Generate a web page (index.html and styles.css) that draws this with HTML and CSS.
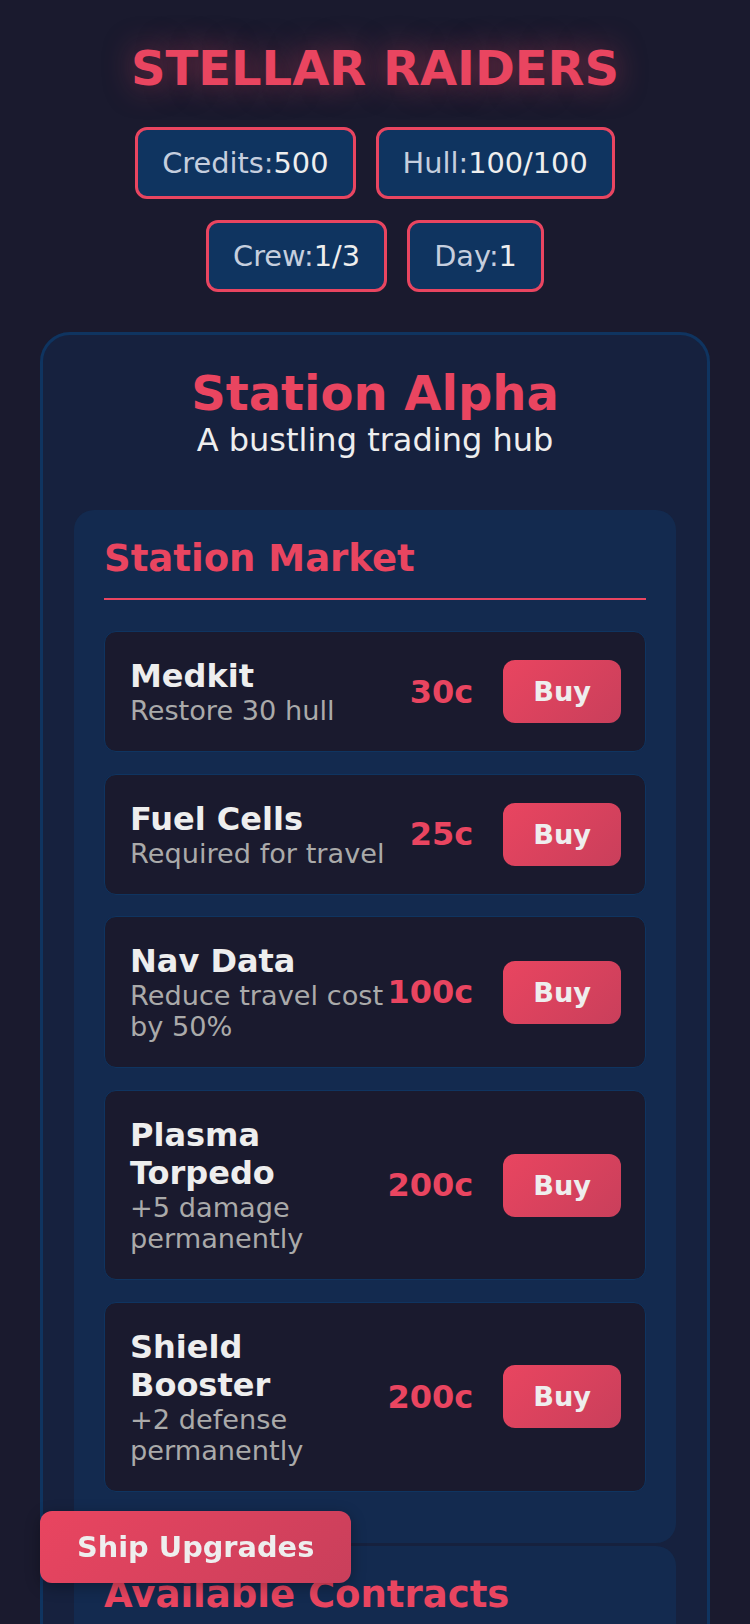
FILE: index.html
```html
<!DOCTYPE html>
<html lang="en">
<head>
<meta charset="utf-8">
<title>Stellar Raiders</title>
<link rel="stylesheet" href="styles.css">
</head>
<body>
<div class="app">
  <h1 class="title">STELLAR RAIDERS</h1>
  <div class="stats">
    <div class="stat"><span class="stat-label">Credits:</span><span class="stat-value">500</span></div>
    <div class="stat"><span class="stat-label">Hull:</span><span class="stat-value">100/100</span></div>
    <div class="stat"><span class="stat-label">Crew:</span><span class="stat-value">1/3</span></div>
    <div class="stat"><span class="stat-label">Day:</span><span class="stat-value">1</span></div>
  </div>

  <div class="panel">
    <div class="location">
      <h2 class="location-name">Station Alpha</h2>
      <p class="location-desc">A bustling trading hub</p>
    </div>

    <section class="section">
      <h3 class="section-title">Station Market</h3>
      <div class="item">
        <div class="item-info">
          <div class="item-name">Medkit</div>
          <div class="item-desc">Restore 30 hull</div>
        </div>
        <div class="item-price">30c</div>
        <button class="btn buy">Buy</button>
      </div>
      <div class="item">
        <div class="item-info">
          <div class="item-name">Fuel Cells</div>
          <div class="item-desc">Required for travel</div>
        </div>
        <div class="item-price">25c</div>
        <button class="btn buy">Buy</button>
      </div>
      <div class="item">
        <div class="item-info">
          <div class="item-name">Nav Data</div>
          <div class="item-desc">Reduce travel cost by 50%</div>
        </div>
        <div class="item-price">100c</div>
        <button class="btn buy">Buy</button>
      </div>
      <div class="item">
        <div class="item-info">
          <div class="item-name">Plasma Torpedo</div>
          <div class="item-desc">+5 damage permanently</div>
        </div>
        <div class="item-price">200c</div>
        <button class="btn buy">Buy</button>
      </div>
      <div class="item">
        <div class="item-info">
          <div class="item-name">Shield Booster</div>
          <div class="item-desc">+2 defense permanently</div>
        </div>
        <div class="item-price">200c</div>
        <button class="btn buy">Buy</button>
      </div>
    </section>

    <section class="section">
      <h3 class="section-title">Available Contracts</h3>
      <div class="item">
        <div class="item-info">
          <div class="item-name">Cargo Run</div>
          <div class="item-desc">Deliver supplies to Outpost Beta</div>
        </div>
        <div class="item-price">150c</div>
        <button class="btn buy">Accept</button>
      </div>
    </section>
  </div>
</div>
<button class="btn floating">Ship Upgrades</button>
</body>
</html>
```
FILE: styles.css
```css
* {
  box-sizing: border-box;
}

html, body {
  margin: 0;
  padding: 0;
}

body {
  background: #1a1a2e;
  color: #eeeeee;
  font-family: "DejaVu Sans", "Noto Sans", sans-serif;
}

.app {
  padding: 40px;
}

.title {
  margin: 0 0 31px;
  text-align: center;
  font-size: 48px;
  font-weight: bold;
  line-height: normal;
  color: #e94560;
  text-shadow: 0 0 30px rgba(233, 69, 96, 0.5);
}

.stats {
  display: flex;
  flex-wrap: wrap;
  justify-content: center;
  gap: 21px 20px;
  margin-bottom: 39.5px;
}

.stat {
  background: #0f3460;
  border: 3px solid #e94560;
  border-radius: 12px;
  padding: 16px 24px;
  font-size: 28.8px;
  line-height: normal;
}

.stat-label {
  color: #c5cede;
}

.stat-value {
  color: #eeeeee;
}

.panel {
  background: #16213e;
  border: 3px solid #0f3460;
  border-radius: 30px;
  padding: 30px 31px;
}

.location {
  text-align: center;
  margin-bottom: 51.5px;
}

.location-name {
  margin: 0;
  font-size: 48px;
  line-height: normal;
  color: #e94560;
}

.location-desc {
  margin: 0;
  font-size: 32px;
  line-height: normal;
  color: #eeeeee;
}

.section {
  background: rgba(15, 52, 96, 0.5);
  border-radius: 20px;
  padding: 27px 30px 30px;
  margin-bottom: 3px;
}

.section-title {
  margin: 0 0 31px;
  padding-bottom: 18px;
  border-bottom: 2px solid #e94560;
  font-size: 37px;
  line-height: normal;
  color: #e94560;
}

.item {
  display: flex;
  align-items: center;
  background: #1a1a2e;
  border: 1px solid #0f3460;
  border-radius: 12px;
  padding: 25px 24px 25px 25px;
  margin-bottom: 21.7px;
}

.item-info {
  flex: 1;
  min-width: 0;
}

.item-name {
  font-size: 32px;
  font-weight: bold;
  line-height: normal;
  color: #eeeeee;
}

.item-desc {
  font-size: 27.2px;
  line-height: normal;
  color: #aaaaaa;
}

.item-price {
  font-size: 32px;
  font-weight: bold;
  color: #e94560;
  margin-right: 30px;
}

.btn {
  font-family: inherit;
  font-weight: bold;
  color: #eeeeee;
  border: none;
  background: linear-gradient(135deg, #e94560, #c93f5b);
  border-radius: 12px;
  line-height: normal;
  cursor: pointer;
}

.buy {
  font-size: 27.2px;
  padding: 16px 30px;
}

.floating {
  position: fixed;
  left: 40px;
  bottom: 41px;
  font-size: 28.8px;
  padding: 19px 37px;
  box-shadow: 0 4px 15px rgba(0, 0, 0, 0.3);
}
```
